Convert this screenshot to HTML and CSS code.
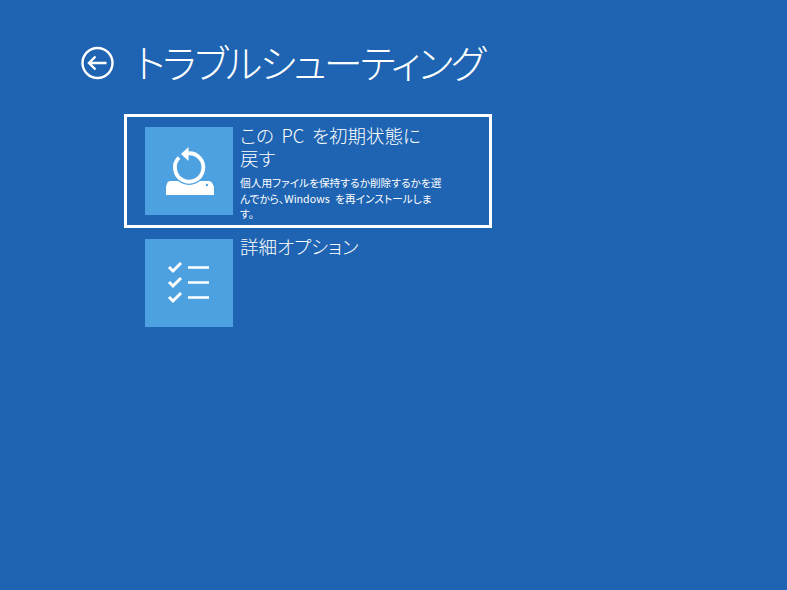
FILE: index.html
```html
<!DOCTYPE html>
<html lang="ja">
<head>
<meta charset="utf-8">
<title>トラブルシューティング</title>
<link rel="stylesheet" href="styles.css">
</head>
<body>
<header class="header">
  <svg class="back" viewBox="0 0 34 34" width="34" height="34" aria-hidden="true">
    <circle cx="16.500" cy="17" r="15" fill="none" stroke="#fff" stroke-width="2.400"/>
    <path d="M25.500 17H8M14.500 10.500L8 17l6.500 6.500" fill="none" stroke="#fff" stroke-width="2.400"/>
  </svg>
  <h1 class="title">トラブルシューティング</h1>
</header>
<main class="list">
  <div class="item selected">
    <div class="tile">
      <svg viewBox="0 0 88 88" width="88" height="88" aria-hidden="true">
        <path d="M25 54h39q3 0 5 6V68H21V60q1-6 4-6z" fill="#fff"/>
        <circle cx="44" cy="40.500" r="16" fill="none" stroke="#4ea1e0" stroke-width="3"/>
        <path d="M43 26.300A14.200 14.200 0 1 1 34 30.500" fill="none" stroke="#fff" stroke-width="3.800"/>
        <path d="M43.500 20v14l-7.500-7z" fill="#fff"/>
        <circle cx="62" cy="58" r="1.200" fill="#4ea1e0"/>
      </svg>
    </div>
    <div class="body">
      <div class="name">この PC を初期状態に戻す</div>
      <div class="desc">個人用ファイルを保持するか削除するかを選んでから、Windows を再インストールします。</div>
    </div>
  </div>
  <div class="item">
    <div class="tile">
      <svg viewBox="0 0 88 88" width="88" height="88" aria-hidden="true">
        <path d="M24 28l4 4 8-8M24 43l4 4 8-8M24 58l4 4 8-8" fill="none" stroke="#fff" stroke-width="3"/>
        <path d="M43 28.500h21M43 43.500h21M43 58.500h21" fill="none" stroke="#fff" stroke-width="2.500"/>
      </svg>
    </div>
    <div class="body">
      <div class="name">詳細オプション</div>
    </div>
  </div>
</main>
</body>
</html>
```
FILE: styles.css
```css
html, body {
  margin: 0;
  height: 100%;
}
body {
  background: #1e64b2;
  color: #fff;
  font-family: "Noto Sans CJK JP", "Noto Sans", sans-serif;
  font-feature-settings: "palt";
  overflow: hidden;
}
.header {
  display: flex;
  align-items: center;
  gap: 20px;
  padding: 38px 0 0 81px;
  height: 46px;
}
.back {
  flex: none;
  margin-top: 3px;
}
.title {
  margin: 0;
  font-size: 39px;
  font-weight: 300;
  line-height: 46px;
  letter-spacing: -2.400px;
  white-space: nowrap;
}
.list {
  display: flex;
  flex-direction: column;
  gap: 5px;
  margin: 30px 0 0 124px;
  width: 368px;
}
.item {
  display: flex;
  gap: 7px;
  padding: 3px 18px 0 18px;
  border: 3px solid transparent;
  box-sizing: border-box;
}
.item.selected {
  border-color: #fff;
  padding-top: 10px;
  height: 114px;
}
.tile {
  flex: none;
  width: 88px;
  height: 88px;
  background: #4ea1e0;
}
.tile svg {
  display: block;
}
.body {
  width: 205px;
}
.name {
  width: 198px;
  font-size: 18.500px;
  font-weight: 300;
  line-height: 23px;
  word-spacing: 3.500px;
  margin-top: -4px;
}
.selected .name {
  margin-top: -3px;
}
.desc {
  width: 203px;
  font-size: 10.700px;
  line-height: 15.500px;
  word-spacing: 3px;
  margin-top: 5px;
}
```
